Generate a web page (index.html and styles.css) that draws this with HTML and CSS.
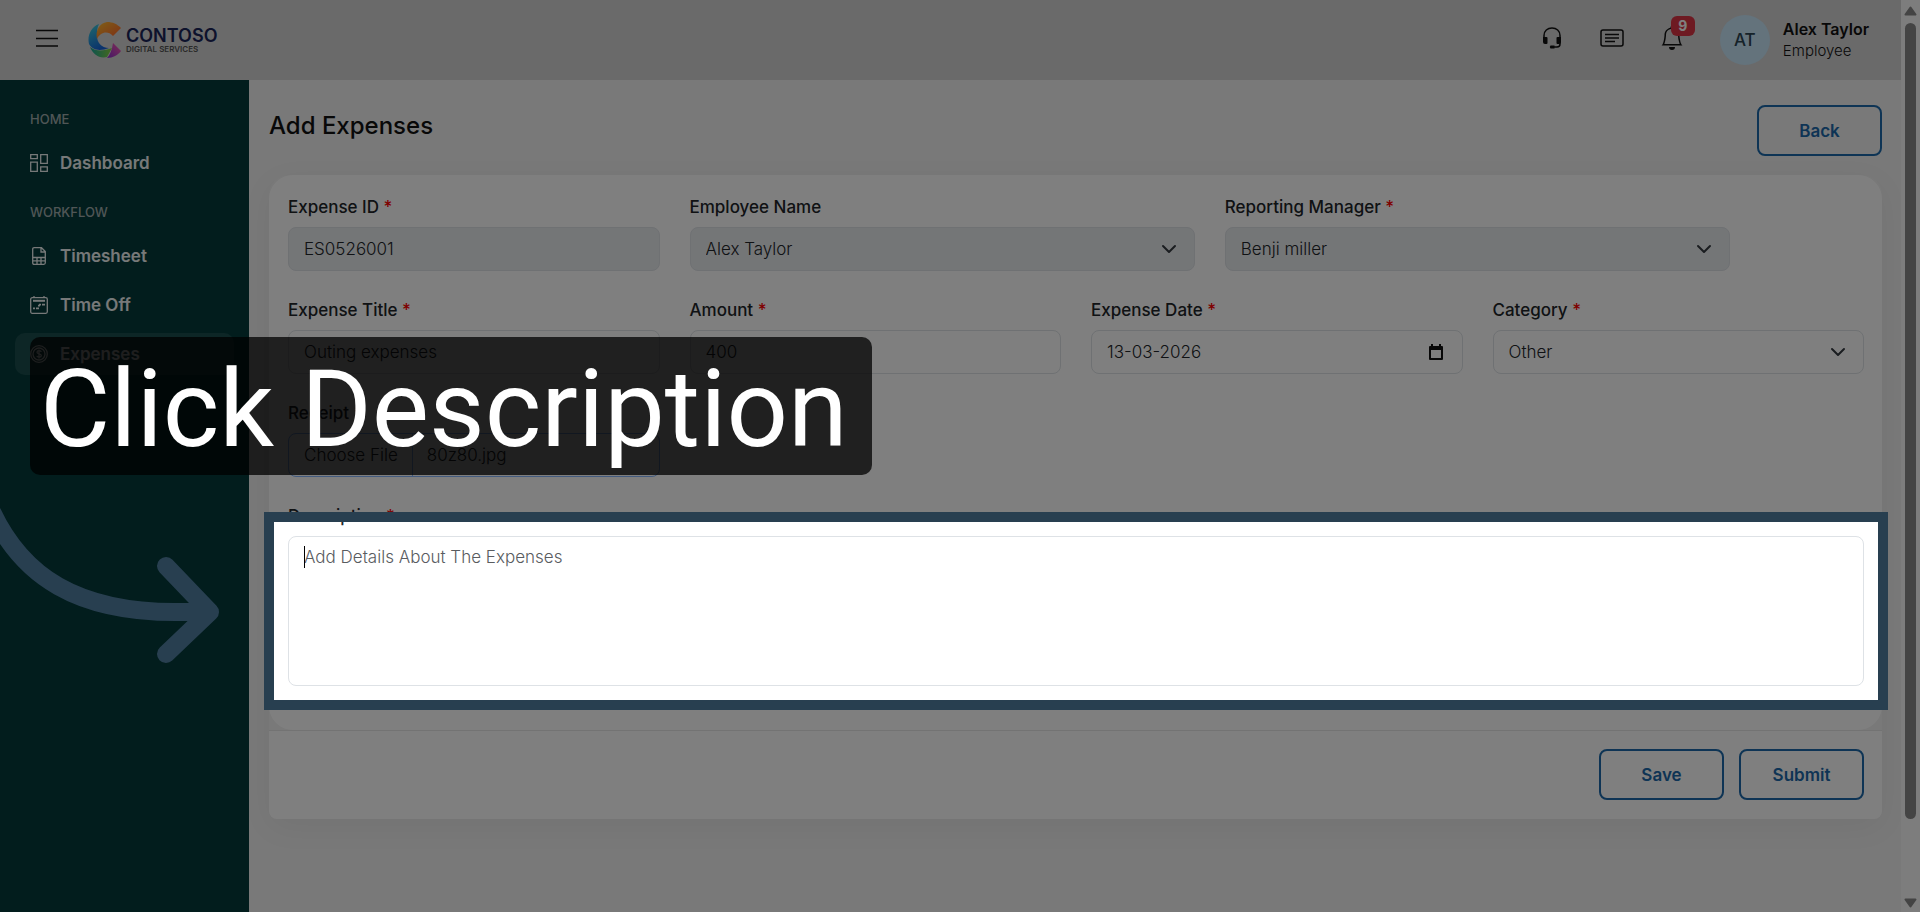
FILE: index.html
```html
<!DOCTYPE html>
<html lang="en">
<head>
<meta charset="utf-8">
<meta name="viewport" content="width=device-width, initial-scale=1">
<title>Add Expenses</title>
<link rel="stylesheet" href="styles.css">
</head>
<body>
<div class="app">
  <header class="topbar">
    <button class="icon-btn menu-btn" type="button" aria-label="Toggle menu">
      <svg width="22" height="18" viewBox="0 0 22 18" fill="none" stroke="currentColor" stroke-width="1.700"><path d="M0 1.500h22M0 9.500h22M0 17h22"/></svg>
    </button>
    <a class="brand" href="#">
      <svg class="brand-mark" width="34" height="36" viewBox="0 0 34 36">
        <defs>
          <linearGradient id="gOrange" x1="0" y1="0" x2="1" y2="1"><stop offset="0" stop-color="#ffc02e"/><stop offset="1" stop-color="#ff5a2a"/></linearGradient>
          <linearGradient id="gBlue" x1="0" y1="0" x2="0.5" y2="1"><stop offset="0" stop-color="#42d3d8"/><stop offset="1" stop-color="#1565d8"/></linearGradient>
          <linearGradient id="gGreen" x1="0" y1="0" x2="1" y2="0"><stop offset="0" stop-color="#16a6a0"/><stop offset="1" stop-color="#8bd43a"/></linearGradient>
          <linearGradient id="gPink" x1="1" y1="0" x2="0" y2="1"><stop offset="0" stop-color="#ff5cab"/><stop offset="1" stop-color="#8a2ccf"/></linearGradient>
        </defs>
        <path d="M11 2C3 5-1 14 1 22c4 7 12 7 20 4-8 0-12-6-12-12 0-5 0-8 2-12z" fill="url(#gBlue)"/>
        <path d="M9 17C7 8 12 1 19 0c6 0 10 2 14 6l-8 8c-5-6-13-4-16 3z" fill="url(#gOrange)"/>
        <path d="M2 25c6 5 14 4 22 1l-5 9C11 37 5 32 2 25z" fill="url(#gGreen)"/>
        <path d="M25 21l8 8c-3 4-8 7-14 7 3-3 5-8 6-15z" fill="url(#gPink)"/>
      </svg>
      <span class="brand-text"><span class="brand-name">CONTOSO</span><span class="brand-sub">DIGITAL SERVICES</span></span>
    </a>
    <div class="topbar-actions">
      <button class="icon-btn" type="button" aria-label="Support">
        <svg width="24" height="24" viewBox="0 0 24 24" fill="none" stroke="currentColor" stroke-width="1.500"><path d="M4 13V9.500C4 5 7.500 2 12 2s8 3 8 7.500V18q0 3-3 3h-4"/><path fill="currentColor" stroke="none" d="M3 11h3.500q1 0 1 1v5q0 1-1 1H5q-2 0-2-2zM21 11h-3.500q-1 0-1 1v5q0 1 1 1H19q2 0 2-2zM10.500 19.500h4v3h-4q-1.500-1.500 0-3z"/></svg>
      </button>
      <button class="icon-btn" type="button" aria-label="News">
        <svg width="24" height="24" viewBox="0 0 24 24" fill="none" stroke="currentColor"><rect x="1" y="4" width="22" height="16" rx="2" stroke-width="1.500"/><path d="M5 8.500h14M5 12h14M5 15.500h10" stroke-width="1.500"/></svg>
      </button>
      <button class="icon-btn bell" type="button" aria-label="Notifications">
        <svg width="24" height="24" viewBox="0 0 16 16" fill="currentColor"><path d="M8 16a2 2 0 0 0 2-2H6a2 2 0 0 0 2 2zM8 1.918l-.797.161A4.002 4.002 0 0 0 4 6c0 .628-.134 2.197-.459 3.742-.16.767-.376 1.566-.663 2.258h10.244c-.287-.692-.502-1.490-.663-2.258C12.134 8.197 12 6.628 12 6a4.002 4.002 0 0 0-3.203-3.920L8 1.917zM14.220 12c.223.447.481.801.780 1H1c.299-.199.557-.553.780-1C2.680 10.200 3 6.880 3 6c0-2.420 1.720-4.440 4.005-4.901a1 1 0 1 1 1.990 0A5.002 5.002 0 0 1 13 6c0 .880.320 4.200 1.220 6z"/></svg>
        <span class="badge">9</span>
      </button>
      <div class="user">
        <span class="avatar">AT</span>
        <span class="user-text"><span class="user-name">Alex Taylor</span><span class="user-role">Employee</span></span>
      </div>
    </div>
  </header>

  <nav class="sidebar">
    <h2 class="nav-label">HOME</h2>
    <ul class="nav-list">
      <li><a class="nav-link" href="#">
        <svg width="18" height="18" viewBox="0 0 18 18" fill="none" stroke="currentColor" stroke-width="1.300"><path d="M.7.7h6.600v4H.7zM10.700.7h6.600v8.600h-6.600zM.7 8.200h6.600v9.100H.7zM10.700 12.800h6.600v4.500h-6.600z"/></svg>
        Dashboard</a></li>
    </ul>
    <h2 class="nav-label">WORKFLOW</h2>
    <ul class="nav-list">
      <li><a class="nav-link" href="#">
        <svg width="18" height="18" viewBox="0 0 18 18" fill="none" stroke="currentColor" stroke-width="1.300"><path d="M2.700 2.200Q2.700.7 4.200.7h7.300l3.800 3.800v11.300q0 1.500-1.500 1.500H4.200q-1.500 0-1.500-1.500zM11 .7v4.300h4.300M2.700 10.500h12.600M2.700 13.800h12.600M7 10.500v6.800M11 10.500v6.800"/></svg>
        Timesheet</a></li>
      <li><a class="nav-link" href="#">
        <svg width="18" height="18" viewBox="0 0 18 18" fill="none" stroke="currentColor" stroke-width="1.300"><rect x=".7" y="1.700" width="16.600" height="15.600" rx="1.500"/><path d="M4 0v2M14 0v2"/><path d="M3 4.800h12" stroke-width="2"/><path d="M9 8.700h2M12 8.700h3M3 12.300h2M6 12.300h3M8 9.700h2" stroke-width="1.800"/></svg>
        Time Off</a></li>
      <li><a class="nav-link active" href="#" aria-current="page">
        <svg width="18" height="18" viewBox="0 0 18 18" fill="none" stroke="currentColor" stroke-width="1.300"><circle cx="9" cy="9" r="8.300"/><circle cx="9" cy="9" r="6"/><path d="M11.300 6.900C10.800 5.200 7 5.300 7 7.200c0 2 4.300 1.500 4.300 3.500 0 1.900-4 2-4.500.2M9 4.500v9"/></svg>
        Expenses</a></li>
    </ul>
  </nav>

  <main class="content">
    <div class="page-head">
      <h1 class="page-title">Add Expenses</h1>
      <button class="btn" type="button">Back</button>
    </div>
    <form class="expense-form">
      <div class="card">
        <div class="field span-3">
          <label for="expense-id">Expense ID <span class="req">*</span></label>
          <input class="control" id="expense-id" type="text" value="ES0526001" disabled>
        </div>
        <div class="field span-4">
          <label for="employee">Employee Name</label>
          <select class="control" id="employee" disabled><option>Alex Taylor</option></select>
        </div>
        <div class="field span-4">
          <label for="manager">Reporting Manager <span class="req">*</span></label>
          <select class="control" id="manager" disabled><option>Benji miller</option></select>
        </div>
        <div class="field span-3 row-start">
          <label for="title">Expense Title <span class="req">*</span></label>
          <input class="control" id="title" type="text" value="Outing expenses">
        </div>
        <div class="field span-3">
          <label for="amount">Amount <span class="req">*</span></label>
          <input class="control" id="amount" type="text" value="400">
        </div>
        <div class="field span-3">
          <label for="date">Expense Date <span class="req">*</span></label>
          <div class="control date-control">
            <input id="date" type="text" value="13-03-2026">
            <button class="icon-btn" type="button" aria-label="Open calendar">
              <svg width="16" height="18" viewBox="0 0 16 18"><path fill="currentColor" fill-rule="evenodd" d="M3 1h2v2h6V1h2v2h1q1 0 1 1v12q0 1-1 1H2q-1 0-1-1V4q0-1 1-1h1zM3 7v8h10V7z"/></svg>
            </button>
          </div>
        </div>
        <div class="field span-3">
          <label for="category">Category <span class="req">*</span></label>
          <select class="control" id="category"><option>Other</option></select>
        </div>
        <div class="field span-3 row-start">
          <label for="receipt">Receipt <span class="req">*</span></label>
          <label class="control file-control" for="receipt">
            <span class="file-btn">Choose File</span><span class="file-name">80z80.jpg</span>
          </label>
          <input class="visually-hidden" id="receipt" type="file">
        </div>
        <div class="field span-12">
          <label for="description">Description <span class="req">*</span></label>
          <div class="spotlight-target">
            <textarea class="control" id="description" placeholder="Add Details About The Expenses"></textarea>
            <span class="caret"></span>
            <span class="spotlight"></span>
          </div>
        </div>
      </div>
      <div class="form-actions">
        <button class="btn" type="button">Save</button>
        <button class="btn" type="submit">Submit</button>
      </div>
    </form>
  </main>
</div>

<div class="scrollbar" aria-hidden="true">
  <svg width="13" height="10" viewBox="0 0 13 10"><path d="M6.500 1.500 11.500 8.500h-10z" fill="currentColor" stroke="currentColor" stroke-width="2" stroke-linejoin="round"/></svg>
  <div class="track"><div class="thumb"></div></div>
  <svg width="13" height="10" viewBox="0 0 13 10"><path d="M6.500 8.500 11.500 1.500h-10z" fill="currentColor" stroke="currentColor" stroke-width="2" stroke-linejoin="round"/></svg>
</div>

<svg class="guide-arrow" width="230" height="200" viewBox="0 480 230 200" fill="none" stroke="#283f50" stroke-width="18" stroke-linecap="round" stroke-linejoin="round"><path d="M-14 498C16 574 76 620 206 611M166 566l44 46-44 42"/></svg>
<p class="guide-caption">Click Description</p>
</body>
</html>
```
FILE: styles.css
```css
* { box-sizing: border-box; }

body {
  position: relative;
  display: flex;
  min-height: 100vh;
  margin: 0;
  overflow: hidden;
  background: #f2f2f2;
  color: #212529;
  font-family: Inter, "Open Sans", sans-serif;
  font-size: 17px;
  line-height: 24px;
}

button, input, select, textarea { font: inherit; color: inherit; }

.app {
  flex: 1;
  display: grid;
  grid-template-columns: 249px 1fr;
  grid-template-rows: 80px 1fr;
}

.icon-btn {
  display: flex;
  padding: 0;
  border: 0;
  background: none;
  color: #111;
}

/* Top bar */
.topbar {
  grid-column: 1 / -1;
  display: flex;
  align-items: center;
  padding: 0 32px 0 36px;
  background: #d4d4d4;
}
.topbar .icon-btn { padding-bottom: 4px; }
.menu-btn { margin-right: 30px; }
.brand {
  display: flex;
  align-items: center;
  gap: 4px;
  color: #1b2559;
  text-decoration: none;
}
.brand-text { display: flex; flex-direction: column; }
.brand-name { font-size: 18px; font-weight: 600; line-height: 18px; }
.brand-sub { font-size: 8px; font-weight: 600; line-height: 8px; color: #555; }
.topbar-actions { display: flex; align-items: center; gap: 36px; margin-left: auto; }
.bell { position: relative; }
.badge {
  position: absolute;
  top: -10px;
  left: 11px;
  width: 24px;
  border-radius: 6px;
  background: #dc3545;
  color: #fff;
  font-size: 14px;
  font-weight: 700;
  line-height: 20px;
}
.user { display: flex; align-items: center; gap: 13px; }
.avatar {
  width: 50px;
  border-radius: 50%;
  background: #c8e6f8;
  color: #2c4453;
  font-weight: 500;
  line-height: 50px;
  text-align: center;
}
.user-text { display: flex; flex-direction: column; line-height: 22px; color: #111; }
.user-name { font-size: 16px; font-weight: 600; }
.user-role { font-size: 15px; font-weight: 300; }

/* Side navigation */
.sidebar {
  padding: 11px 15px;
  background: #053b3b;
  color: #fff;
}
.nav-label {
  margin: 18px 15px 13px;
  color: #a0adad;
  font-size: 13px;
  font-weight: 500;
  line-height: 20px;
}
.nav-list {
  display: grid;
  gap: 7px;
  margin: 0;
  padding: 0;
  list-style: none;
}
.nav-link {
  display: flex;
  align-items: center;
  gap: 12px;
  height: 42px;
  padding: 0 15px;
  border-radius: 10px;
  color: #eef2f2;
  font-weight: 600;
  text-decoration: none;
}
.nav-link.active { background: #1b4d4d; }

/* Page */
.content { padding: 25px 19px 25px 20px; }
.page-head {
  display: flex;
  align-items: flex-start;
  justify-content: space-between;
  margin-bottom: 19px;
}
.page-title {
  margin: 6px 0 0;
  color: #111;
  font-size: 24px;
  font-weight: 500;
  line-height: 30px;
}
.btn {
  width: 125px;
  height: 51px;
  border: 2px solid #1c69aa;
  border-radius: 8px;
  background: transparent;
  color: #1c69aa;
  font-weight: 600;
}
.expense-form {
  border-radius: 20px 20px 10px 10px;
  box-shadow: 0 8px 32px rgba(0, 0, 0, 0.05);
}
.card {
  display: grid;
  grid-template-columns: repeat(12, 1fr);
  gap: 27px 30px;
  padding: 20px 18px 44px 19px;
  border-radius: 24px;
  background: #fff;
}
.field { display: flex; flex-direction: column; gap: 8px; min-width: 0; }
.field > label:first-child { font-weight: 500; color: #212529; }
.span-3 { grid-column-end: span 3; }
.span-4 { grid-column-end: span 4; }
.span-12 { grid-column-end: span 12; }
.row-start { grid-column-start: 1; }
.req { color: #f00; line-height: 1; }

.control {
  width: 100%;
  height: 44px;
  padding: 0 15px;
  border: 1px solid #dee2e6;
  border-radius: 8px;
  background-color: #fff;
  color: #212529;
  font-weight: 300;
  outline: 0;
}
.control:disabled { background-color: #e9ecef; opacity: 1; }
select.control {
  appearance: none;
  background-image: url("data:image/svg+xml,%3Csvg xmlns='http://www.w3.org/2000/svg' viewBox='0 0 16 16'%3E%3Cpath fill='none' stroke='%23343a40' stroke-linecap='round' stroke-linejoin='round' stroke-width='2' d='m2 5 6 6 6-6'/%3E%3C/svg%3E");
  background-position: right 17px center;
  background-repeat: no-repeat;
  background-size: 16px 16px;
}
.date-control { display: flex; align-items: center; padding-right: 18px; }
.date-control input {
  flex: 1;
  min-width: 0;
  padding: 0;
  border: 0;
  background: none;
  outline: 0;
}
.file-control {
  display: flex;
  align-items: center;
  padding-left: 0;
  border-color: #86b7fe;
}
.file-btn {
  padding: 9px 14px 9px 15px;
  border-right: 1px solid #86b7fe;
}
.file-name { padding-left: 14px; }
.visually-hidden {
  position: absolute;
  width: 1px;
  height: 1px;
  opacity: 0;
}
.spotlight-target { position: relative; }
textarea.control {
  display: block;
  height: 150px;
  padding: 8px 15px;
  resize: none;
}
textarea.control::placeholder { color: #595c5f; opacity: 1; }
.caret {
  position: absolute;
  top: 10px;
  left: 16px;
  width: 1px;
  height: 22px;
  background: #000;
}
.form-actions {
  display: flex;
  justify-content: flex-end;
  gap: 15px;
  padding: 18px 18px 19px;
  border-top: 1px solid #e6e6e6;
  border-radius: 0 0 8px 8px;
  background: #fff;
}

/* Scroll bar */
.scrollbar {
  display: flex;
  flex-direction: column;
  align-items: center;
  width: 19px;
  padding: 6px 0 4px;
  background: #fafafa;
  color: #888;
}
.track { flex: 1; width: 11px; padding: 7px 0; }
.thumb { height: 91.7%; border-radius: 6px; background: #888; }

/* Guided step: dims the page around the highlighted field */
.spotlight {
  position: absolute;
  z-index: 10;
  inset: -24px;
  border: 10px solid #283f50;
  box-shadow: 0 0 0 3000px rgba(0, 0, 0, 0.5);
  pointer-events: none;
}
.guide-arrow {
  position: absolute;
  z-index: 11;
  top: 480px;
  left: 0;
}
.guide-caption {
  position: absolute;
  z-index: 11;
  top: 337px;
  left: 30px;
  margin: 0;
  padding: 6px 24px 0 10px;
  border-radius: 10px;
  background: rgba(0, 0, 0, 0.75);
  color: #fff;
  font-family: Roboto, Inter, sans-serif;
  font-size: 108px;
  line-height: 132px;
  white-space: nowrap;
}
```
